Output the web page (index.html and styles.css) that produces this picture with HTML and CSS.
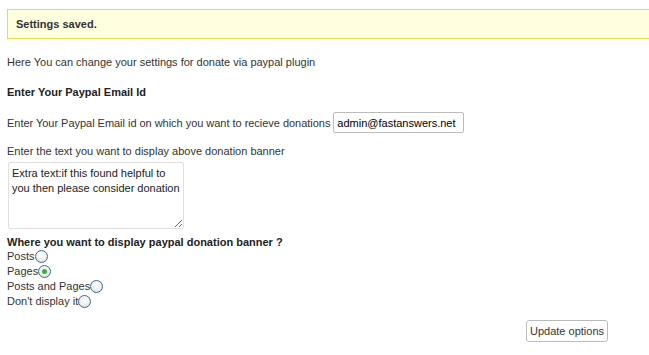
FILE: index.html
```html
<!DOCTYPE html>
<html lang="en">
<head>
    <meta charset="UTF-8">
    <title>Paypal Donation Settings</title>
    <link rel="stylesheet" href="styles.css">
</head>
<body>
    <div class="wrap">
        <div class="updated"><p>Settings saved.</p></div>

        <form class="settings">
            <p class="intro">Here You can change your settings for donate via paypal plugin</p>

            <h3>Enter Your Paypal Email Id</h3>
            <div class="email-row">
                <label for="email">Enter Your Paypal Email id on which you want to recieve donations</label>
                <input type="text" id="email" value="admin@fastanswers.net">
            </div>

            <label class="block-label" for="extra">Enter the text you want to display above donation banner</label>
            <textarea id="extra">Extra text:if this found helpful to you then please consider donation</textarea>

            <h4>Where you want to display paypal donation banner ?</h4>
            <div class="choices">
                <label>Posts<input type="radio" name="where"></label>
                <label>Pages<input type="radio" name="where" checked></label>
                <label>Posts and Pages<input type="radio" name="where"></label>
                <label>Don't display it<input type="radio" name="where"></label>
            </div>

            <div class="submit">
                <button type="button">Update options</button>
            </div>
        </form>
    </div>
</body>
</html>
```

FILE: styles.css
```css
* {
    margin: 0;
    padding: 0;
    box-sizing: border-box;
}

body {
    background: #fff;
    color: #333;
    font-family: "Liberation Sans", Arial, sans-serif;
    font-size: 11px;
    overflow: hidden;
}

.wrap {
    padding: 9px 0 0 7px;
    margin-right: -30px;
}

.updated {
    background: #ffffe0;
    border: 1px solid #e6db55;
    padding: 8px 8px 7px;
}

.updated p {
    font-size: 11px;
    font-weight: bold;
    color: #333;
    line-height: 13px;
}

.settings {
    padding-right: 30px;
}

.intro {
    margin-top: 17px;
    line-height: 13px;
}

.settings h3 {
    margin-top: 17px;
    font-size: 11px;
    font-weight: bold;
    color: #222;
    line-height: 13px;
}

.email-row {
    margin-top: 13px;
    display: flex;
    align-items: center;
    gap: 3px;
}

.email-row label {
    letter-spacing: -0.03px;
}

.email-row input {
    width: 131px;
    height: 21px;
    border: 1px solid #bbb;
    border-radius: 2px;
    padding: 0 3px;
    font-family: inherit;
    font-size: 11px;
    color: #000;
}

.block-label {
    display: block;
    margin-top: 12px;
    line-height: 13px;
}

.settings textarea {
    display: block;
    margin: 4px 0 0 1px;
    width: 176px;
    height: 67px;
    border: 1px solid #dfdfdf;
    border-radius: 2px;
    padding: 3px 3px;
    font-family: inherit;
    font-size: 11px;
    line-height: 15px;
    color: #222;
}

.settings h4 {
    margin-top: 7px;
    font-size: 11px;
    font-weight: bold;
    color: #222;
    line-height: 13px;
}

.choices label {
    display: flex;
    align-items: center;
    height: 15px;
    line-height: 13px;
}

.choices input {
    appearance: none;
    width: 13px;
    height: 13px;
    border: 1px solid #3a6aa0;
    border-radius: 50%;
    background: radial-gradient(circle at 50% 35%, #fff 0%, #f0f0ee 50%, #d6d6d2 100%);
    display: grid;
    place-items: center;
}

.choices input:checked::after {
    content: '';
    width: 5px;
    height: 5px;
    border-radius: 50%;
    background: #33b035;
}

.submit {
    display: flex;
    justify-content: flex-end;
    padding-right: 41px;
    margin-top: 11px;
}

.submit button {
    height: 22px;
    padding: 0 3px;
    background: #fff;
    border: 1px solid #bbb;
    border-radius: 3px;
    font-family: inherit;
    font-size: 11px;
    color: #333;
}
```
